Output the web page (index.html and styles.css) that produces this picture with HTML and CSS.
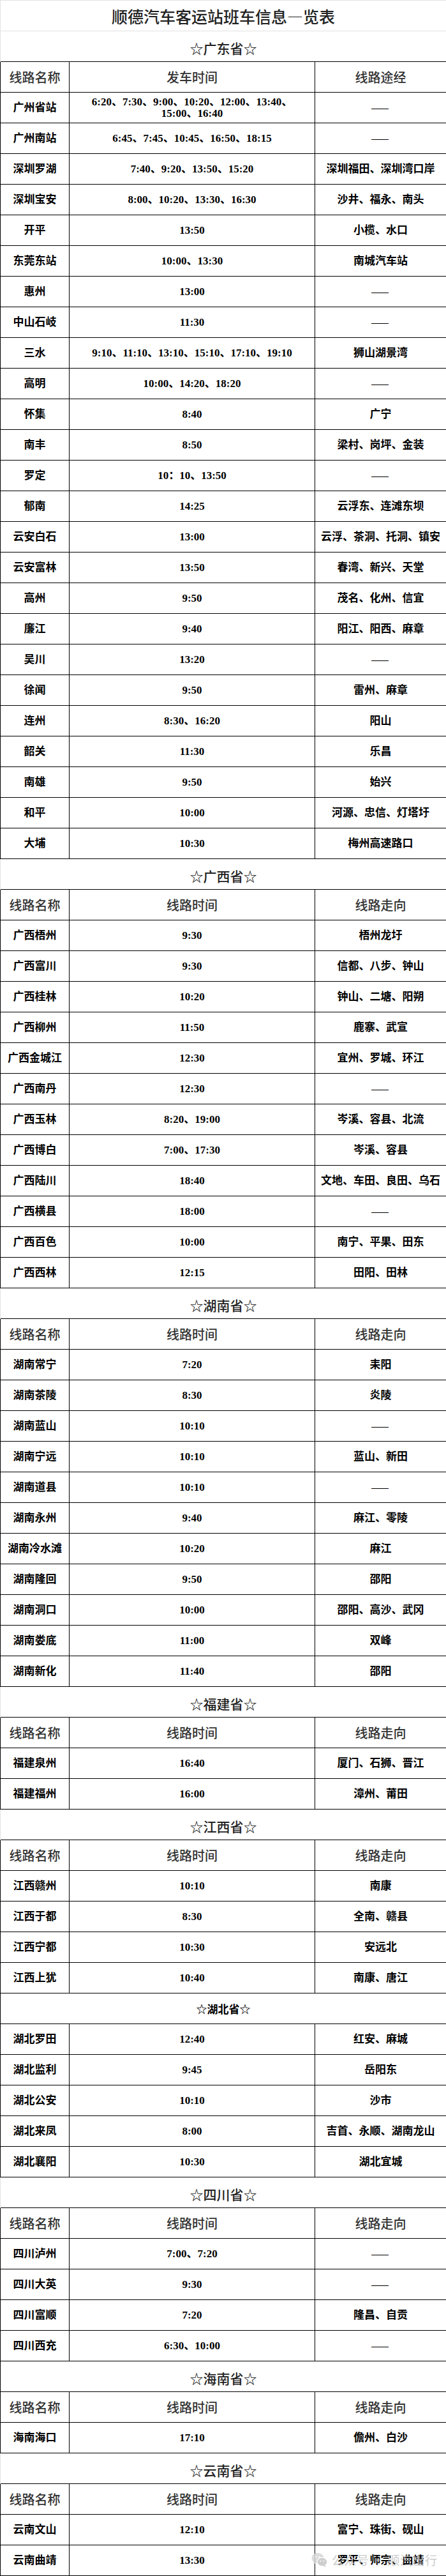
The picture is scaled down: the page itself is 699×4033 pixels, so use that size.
FILE: index.html
```html
<!DOCTYPE html>
<html lang="zh-CN">
<head>
<meta charset="utf-8">
<title>顺德汽车客运站班车信息一览表</title>
<link rel="stylesheet" href="styles.css">
</head>
<body>
<div class="page">
<table class="sheet">
<colgroup><col class="c1"><col class="c2"><col class="c3"></colgroup>
<tbody>
<tr class="title-row"><td colspan="3">顺德汽车客运站班车信息—览表</td></tr>

<tr class="prov"><td colspan="3">☆广东省☆</td></tr>
<tr class="head"><td>线路名称</td><td>发车时间</td><td>线路途经</td></tr>
<tr><td>广州省站</td><td class="two">6:20、7:30、9:00、10:20、12:00、13:40、<br>15:00、16:40</td><td><span class="dash">——</span></td></tr>
<tr><td>广州南站</td><td>6:45、7:45、10:45、16:50、18:15</td><td><span class="dash">——</span></td></tr>
<tr><td>深圳罗湖</td><td>7:40、9:20、13:50、15:20</td><td>深圳福田、深圳湾口岸</td></tr>
<tr><td>深圳宝安</td><td>8:00、10:20、13:30、16:30</td><td>沙井、福永、南头</td></tr>
<tr><td>开平</td><td>13:50</td><td>小榄、水口</td></tr>
<tr><td>东莞东站</td><td>10:00、13:30</td><td>南城汽车站</td></tr>
<tr><td>惠州</td><td>13:00</td><td><span class="dash">——</span></td></tr>
<tr><td>中山石岐</td><td>11:30</td><td><span class="dash">——</span></td></tr>
<tr><td>三水</td><td>9:10、11:10、13:10、15:10、17:10、19:10</td><td>狮山湖景湾</td></tr>
<tr><td>高明</td><td>10:00、14:20、18:20</td><td><span class="dash">——</span></td></tr>
<tr><td>怀集</td><td>8:40</td><td>广宁</td></tr>
<tr><td>南丰</td><td>8:50</td><td>梁村、岗坪、金装</td></tr>
<tr><td>罗定</td><td>10：10、13:50</td><td><span class="dash">——</span></td></tr>
<tr><td>郁南</td><td>14:25</td><td>云浮东、连滩东坝</td></tr>
<tr><td>云安白石</td><td>13:00</td><td>云浮、茶洞、托洞、镇安</td></tr>
<tr><td>云安富林</td><td>13:50</td><td>春湾、新兴、天堂</td></tr>
<tr><td>高州</td><td>9:50</td><td>茂名、化州、信宜</td></tr>
<tr><td>廉江</td><td>9:40</td><td>阳江、阳西、麻章</td></tr>
<tr><td>吴川</td><td>13:20</td><td><span class="dash">——</span></td></tr>
<tr><td>徐闻</td><td>9:50</td><td>雷州、麻章</td></tr>
<tr><td>连州</td><td>8:30、16:20</td><td>阳山</td></tr>
<tr><td>韶关</td><td>11:30</td><td>乐昌</td></tr>
<tr><td>南雄</td><td>9:50</td><td>始兴</td></tr>
<tr><td>和平</td><td>10:00</td><td>河源、忠信、灯塔圩</td></tr>
<tr><td>大埔</td><td>10:30</td><td>梅州高速路口</td></tr>

<tr class="prov"><td colspan="3">☆广西省☆</td></tr>
<tr class="head"><td>线路名称</td><td>线路时间</td><td>线路走向</td></tr>
<tr><td>广西梧州</td><td>9:30</td><td>梧州龙圩</td></tr>
<tr><td>广西富川</td><td>9:30</td><td>信都、八步、钟山</td></tr>
<tr><td>广西桂林</td><td>10:20</td><td>钟山、二塘、阳朔</td></tr>
<tr><td>广西柳州</td><td>11:50</td><td>鹿寨、武宣</td></tr>
<tr><td>广西金城江</td><td>12:30</td><td>宜州、罗城、环江</td></tr>
<tr><td>广西南丹</td><td>12:30</td><td><span class="dash">——</span></td></tr>
<tr><td>广西玉林</td><td>8:20、19:00</td><td>岑溪、容县、北流</td></tr>
<tr><td>广西博白</td><td>7:00、17:30</td><td>岑溪、容县</td></tr>
<tr><td>广西陆川</td><td>18:40</td><td>文地、车田、良田、乌石</td></tr>
<tr><td>广西横县</td><td>18:00</td><td><span class="dash">——</span></td></tr>
<tr><td>广西百色</td><td>10:00</td><td>南宁、平果、田东</td></tr>
<tr><td>广西西林</td><td>12:15</td><td>田阳、田林</td></tr>

<tr class="prov"><td colspan="3">☆湖南省☆</td></tr>
<tr class="head"><td>线路名称</td><td>线路时间</td><td>线路走向</td></tr>
<tr><td>湖南常宁</td><td>7:20</td><td>耒阳</td></tr>
<tr><td>湖南茶陵</td><td>8:30</td><td>炎陵</td></tr>
<tr><td>湖南蓝山</td><td>10:10</td><td><span class="dash">——</span></td></tr>
<tr><td>湖南宁远</td><td>10:10</td><td>蓝山、新田</td></tr>
<tr><td>湖南道县</td><td>10:10</td><td><span class="dash">——</span></td></tr>
<tr><td>湖南永州</td><td>9:40</td><td>麻江、零陵</td></tr>
<tr><td>湖南冷水滩</td><td>10:20</td><td>麻江</td></tr>
<tr><td>湖南隆回</td><td>9:50</td><td>邵阳</td></tr>
<tr><td>湖南洞口</td><td>10:00</td><td>邵阳、高沙、武冈</td></tr>
<tr><td>湖南娄底</td><td>11:00</td><td>双峰</td></tr>
<tr><td>湖南新化</td><td>11:40</td><td>邵阳</td></tr>

<tr class="prov"><td colspan="3">☆福建省☆</td></tr>
<tr class="head"><td>线路名称</td><td>线路时间</td><td>线路走向</td></tr>
<tr><td>福建泉州</td><td>16:40</td><td>厦门、石狮、晋江</td></tr>
<tr><td>福建福州</td><td>16:00</td><td>漳州、莆田</td></tr>

<tr class="prov"><td colspan="3">☆江西省☆</td></tr>
<tr class="head"><td>线路名称</td><td>线路时间</td><td>线路走向</td></tr>
<tr><td>江西赣州</td><td>10:10</td><td>南康</td></tr>
<tr><td>江西于都</td><td>8:30</td><td>全南、赣县</td></tr>
<tr><td>江西宁都</td><td>10:30</td><td>安远北</td></tr>
<tr><td>江西上犹</td><td>10:40</td><td>南康、唐江</td></tr>

<tr class="prov-dark"><td colspan="3">☆湖北省☆</td></tr>
<tr><td>湖北罗田</td><td>12:40</td><td>红安、麻城</td></tr>
<tr><td>湖北监利</td><td>9:45</td><td>岳阳东</td></tr>
<tr><td>湖北公安</td><td>10:10</td><td>沙市</td></tr>
<tr><td>湖北来凤</td><td>8:00</td><td>吉首、永顺、湖南龙山</td></tr>
<tr><td>湖北襄阳</td><td>10:30</td><td>湖北宜城</td></tr>

<tr class="prov"><td colspan="3">☆四川省☆</td></tr>
<tr class="head"><td>线路名称</td><td>线路时间</td><td>线路走向</td></tr>
<tr><td>四川泸州</td><td>7:00、7:20</td><td><span class="dash">——</span></td></tr>
<tr><td>四川大英</td><td>9:30</td><td><span class="dash">——</span></td></tr>
<tr><td>四川富顺</td><td>7:20</td><td>隆昌、自贡</td></tr>
<tr><td>四川西充</td><td>6:30、10:00</td><td><span class="dash">——</span></td></tr>

<tr class="prov prov-edge"><td colspan="3">☆海南省☆</td></tr>
<tr class="head"><td>线路名称</td><td>线路时间</td><td>线路走向</td></tr>
<tr><td>海南海口</td><td>17:10</td><td>儋州、白沙</td></tr>

<tr class="prov"><td colspan="3">☆云南省☆</td></tr>
<tr class="head"><td>线路名称</td><td>线路时间</td><td>线路走向</td></tr>
<tr><td>云南文山</td><td>12:10</td><td>富宁、珠街、砚山</td></tr>
<tr><td>云南曲靖</td><td>13:30</td><td>罗平、师宗、曲靖</td></tr>
</tbody>
</table>

<div class="watermark">
<svg class="wm-icon" width="26" height="24" viewBox="0 0 26 24" aria-hidden="true">
<ellipse cx="10" cy="9" rx="9.5" ry="8" fill="#d6d6d6"/>
<path d="M4 15 L3 19.5 L8 16.5 Z" fill="#d6d6d6"/>
<ellipse cx="17" cy="15" rx="8" ry="6.8" fill="#c6c6c6" stroke="#fff" stroke-width="1.2"/>
<path d="M21 20 L23 23 L18 21.2 Z" fill="#c6c6c6"/>
<circle cx="7" cy="7" r="1.2" fill="#fff"/>
<circle cx="12.5" cy="7" r="1.2" fill="#fff"/>
<circle cx="14.5" cy="13.5" r="1" fill="#fff"/>
<circle cx="19.5" cy="13.5" r="1" fill="#fff"/>
</svg>
<span class="wm-text">公众号 · 顺汽出行</span>
</div>
</div>
</body>
</html>
```

FILE: styles.css
```css
html, body {
  margin: 0;
  padding: 0;
  background: #ffffff;
}

.page {
  position: relative;
  width: 699px;
}

.sheet {
  width: 699px;
  border-collapse: collapse;
  table-layout: fixed;
}

.c1 { width: 108px; }
.c2 { width: 385px; }
.c3 { width: 206px; }

.sheet td {
  height: 48px;
  padding: 0 2px;
  box-sizing: border-box;
  border: 1px solid #000;
  text-align: center;
  vertical-align: middle;
  font-family: "Liberation Serif", "Noto Sans CJK SC", serif;
  font-size: 17px;
  line-height: 18px;
  font-weight: 700;
  color: #000;
  white-space: nowrap;
}

.dash {
  font-family: "Noto Sans CJK SC", sans-serif;
  font-weight: 400;
  letter-spacing: 2px;
}

.title-row td {
  border: 1px solid #e2e2e2;
  font-family: "Noto Sans CJK SC", sans-serif;
  font-size: 25px;
  font-weight: 500;
  color: #222;
}

.prov td {
  border-top: none;
  border-bottom: none;
  border-left: 1px solid #e2e2e2;
  border-right: 1px solid #e2e2e2;
  font-family: "Noto Sans CJK SC", sans-serif;
  font-size: 21px;
  font-weight: 500;
  color: #222;
  padding-top: 4px;
}

.prov-edge td {
  border-left: 1px solid #000;
}

.prov-dark td {
  font-family: "Noto Sans CJK SC", sans-serif;
  font-size: 17px;
  font-weight: 700;
}

.head td {
  font-family: "Noto Sans CJK SC", sans-serif;
  font-size: 20px;
  font-weight: 500;
  color: #333;
}

.watermark {
  position: absolute;
  left: 488px;
  top: 3994px;
  display: flex;
  align-items: center;
  gap: 6px;
  opacity: 0.85;
}

.wm-text {
  font-family: "Noto Sans CJK SC", sans-serif;
  font-size: 19px;
  color: #c4c4c4;
  letter-spacing: 0.5px;
}
```
